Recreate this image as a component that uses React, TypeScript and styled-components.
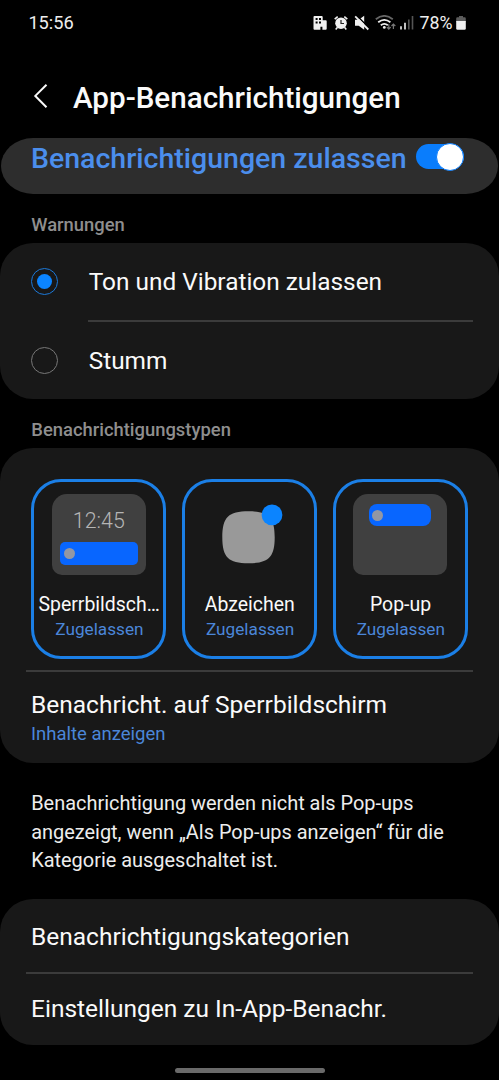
import React, { useState } from "react";
import styled, { createGlobalStyle, css } from "styled-components";

const GlobalStyle = createGlobalStyle`
  * { box-sizing: border-box; }
  body { margin: 0; background: #000; font-family: Roboto, sans-serif; }
`;

const Screen = styled.main`
  display: flex;
  flex-direction: column;
  width: 499px;
  height: 1080px;
  overflow: hidden;
  background: #000;
  color: #fafafa;
`;

const StatusBar = styled.div`
  display: flex;
  align-items: center;
  justify-content: space-between;
  height: 45px;
  padding: 0 33.5px 0 28.4px;
  font-size: 18.2px;
  line-height: 22px;
  color: #eee;
`;

const StatusIcons = styled.div`
  display: flex;
  align-items: center;
  svg { display: block; }
`;

const Percent = styled.span`
  width: 36px;
  margin-left: 5px;
  font-size: 17.8px;
`;

const Header = styled.header`
  display: flex;
  align-items: center;
  height: 93px;
  padding: 12px 0 0 32px;
`;

const BackButton = styled.button`
  display: flex;
  width: 41px;
  padding: 0;
  margin-top: -3px;
  border: 0;
  background: none;
`;

const Title = styled.h1`
  margin: 0;
  font-size: 29.6px;
  font-weight: 500;
  line-height: 36px;
`;

const MasterRow = styled.div`
  display: flex;
  align-items: center;
  justify-content: space-between;
  height: 56px;
  margin: 0 1px;
  padding: 0 34px 17px 30px;
  border-radius: 32px / 28px;
  background: #2d2d2d;
`;

const MasterLabel = styled.span`
  padding-top: 2px;
  font-size: 28.5px;
  font-weight: 500;
  line-height: 34px;
  color: #4b8eec;
  white-space: nowrap;
`;

const Switch = styled.button<{ $on: boolean }>`
  display: flex;
  align-items: center;
  justify-content: ${(p) => (p.$on ? "flex-end" : "flex-start")};
  width: 48px;
  height: 25px;
  padding: 0;
  margin-top: -2px;
  border: 0;
  border-radius: 13px;
  background: ${(p) => (p.$on ? "#0a7dfc" : "#666")};
`;

const Knob = styled.span`
  flex: none;
  width: 28px;
  height: 28px;
  border: 1.5px solid #0a7dfc;
  border-radius: 50%;
  background: #fff;
`;

const SectionLabel = styled.h2<{ $height: number }>`
  display: flex;
  align-items: flex-end;
  height: ${(p) => p.$height}px;
  margin: 0;
  padding: 0 0 7px 31.3px;
  font-size: 18.4px;
  font-weight: 500;
  line-height: 22px;
  color: #8e8e8e;
`;

const Card = styled.section<{ $height: number }>`
  display: flex;
  flex-direction: column;
  height: ${(p) => p.$height}px;
  border-radius: 33px;
  background: #181818;
`;

const Divider = styled.hr<{ $inset: number }>`
  flex: none;
  width: auto;
  height: 1.5px;
  margin: 0 26px 0 ${(p) => p.$inset}px;
  border: 0;
  background: #3b3b3b;
`;

const RadioRow = styled.label`
  display: flex;
  flex: 1;
  align-items: center;
  padding-left: 31px;
  font-size: 24.4px;
`;

const Radio = styled.span<{ $checked: boolean }>`
  display: grid;
  place-items: center;
  width: 27px;
  height: 27px;
  margin-right: 30.7px;
  border: 1.5px solid #777;
  border-radius: 50%;
  ${(p) =>
    p.$checked &&
    css`
      border-color: #1c79d8;
      &::after {
        content: "";
        width: 15px;
        height: 15px;
        border-radius: 50%;
        background: #0b84ff;
      }
    `}
`;

const Tiles = styled.div`
  display: flex;
  gap: 15.7px;
  height: 222px;
  padding: 30.5px 31.3px 11px;
`;

const Tile = styled.div`
  display: flex;
  flex: 1;
  flex-direction: column;
  align-items: center;
  min-width: 0;
  border: 3px solid #1b7fe6;
  border-radius: 30px;
  padding-top: 12.5px;
`;

const Preview = styled.div<{ $plain?: boolean }>`
  display: flex;
  flex-direction: column;
  align-items: center;
  width: 94px;
  height: 80.5px;
  border-radius: 15px 15px 10px 10px;
  background: ${(p) => (p.$plain ? "none" : "#404040")};
  svg { display: block; overflow: visible; }
`;

const Clock = styled.span`
  margin-top: 15px;
  font-size: 21.4px;
  font-weight: 300;
  line-height: 24px;
  color: #b5b5b5;
`;

const Banner = styled.span<{ $popup?: boolean }>`
  display: flex;
  align-items: center;
  width: ${(p) => (p.$popup ? 62 : 78)}px;
  height: ${(p) => (p.$popup ? 22 : 23)}px;
  margin-top: ${(p) => (p.$popup ? 10 : 9)}px;
  padding-left: ${(p) => (p.$popup ? 2.5 : 4)}px;
  border-radius: ${(p) => (p.$popup ? 8 : 5)}px;
  background: #0866ff;
  &::before {
    content: "";
    width: 11px;
    height: 11px;
    border-radius: 50%;
    background: #9297a4;
  }
`;

const TileName = styled.span`
  margin-top: 18px;
  padding-left: 0.6px;
  font-size: 19.45px;
  line-height: 24px;
  white-space: nowrap;
`;

const TileState = styled.span`
  margin-top: 1px;
  padding-left: 1.2px;
  font-size: 17.2px;
  line-height: 22px;
  color: #4b86d8;
`;

const ListRow = styled.div<{ $drop?: number }>`
  display: flex;
  flex: 1;
  flex-direction: column;
  justify-content: center;
  padding-left: 31px;
  padding-top: ${(p) => p.$drop ?? 0}px;
  font-size: 24.5px;
  line-height: 30px;
`;

const SubText = styled.span`
  font-size: 18.5px;
  line-height: 29px;
  color: #4b86d8;
`;

const Note = styled.p`
  height: 136px;
  margin: 0;
  padding: 27.1px 0 0 31.2px;
  font-size: 19.93px;
  line-height: 28.5px;
  color: #ededed;
  white-space: pre-line;
`;

const HomeBar = styled.div`
  width: 150px;
  height: 5px;
  margin: 23px auto 0;
  border-radius: 3px;
  background: #6a6a6a;
`;

const StatusGlyphs = () => (
  <svg width="102" height="16" viewBox="0 0 102 16" fill="none">
    <path
      fill="#f0f0f0"
      fillRule="evenodd"
      d="M1.5 1h7.2q1 0 1 1v3.3h3q1 0 1 1v7.5q0 1-1 1H9.4v-3h-2v3H1.5q-1 0-1-1V2q0-1 1-1zM2.6 3v2h2V3zM6 3v2h2V3zM2.6 6.5v2h2v-2zM6 6.5v2h2v-2z"
    />
    <circle cx="28" cy="8.2" r="5.8" fill="#f0f0f0" />
    <path d="M28 5v3.5h3" stroke="#222" strokeWidth="1.2" />
    <path d="M21.7 4.2l3-2.6M34.3 4.2l-3-2.6M24.3 12.5l-1.6 1.9M31.7 12.5l1.6 1.9" stroke="#f0f0f0" strokeWidth="1.6" />
    <path d="M42 4.8h3.7l5.5-4.1v14.1L45.7 10.7H42z" fill="#f0f0f0" />
    <path d="M43.4 0.2L56.5 13.3" stroke="#000" strokeWidth="1.4" />
    <path d="M42.2 1.3L55.3 14.5" stroke="#f0f0f0" strokeWidth="1.8" />
    <path d="M62.8 4.2Q71.3-2.4 79.8 4.2" stroke="#666" strokeWidth="1.8" />
    <path d="M65.2 7.3Q71.3 2.6 77.4 7.3M67.8 10.3Q71.3 7.6 74.8 10.3" stroke="#f0f0f0" strokeWidth="1.8" />
    <circle cx="71.3" cy="12.4" r="1.4" fill="#f0f0f0" />
    <path d="M75.8 9.3v4.7M73.9 12.2l1.9 2 1.9-2M80.4 14V9.2M78.5 11l1.9-2 1.9 2" stroke="#777" strokeWidth="1.2" />
    <path d="M88 11.2v3.2M92 7.8v6.6" stroke="#f0f0f0" strokeWidth="1.6" />
    <path d="M95.8 4.5v9.9M99.5 1v13.4" stroke="#555" strokeWidth="1.6" />
  </svg>
);

const BatteryIcon = () => (
  <svg width="10" height="16" viewBox="0 0 10 16">
    <path d="M3 1h4v1.3h1.6q1.2 0 1.2 1.2V7H.2V3.5q0-1.2 1.2-1.2H3z" fill="#5b5b5b" />
    <path d="M.2 6h9.6v7.6q0 1.2-1.2 1.2H1.4q-1.2 0-1.2-1.2z" fill="#f0f0f0" />
  </svg>
);

const BadgePreview = () => (
  <svg width="94" height="80.5" viewBox="0 0 94 80.5">
    <path d="M45.5 17.3c20 0 26.2 6 26.2 26s-6.2 26-26.2 26-26.2-6-26.2-26 6.2-26 26.2-26z" fill="#999" />
    <circle cx="69" cy="20.9" r="10.4" fill="#0b84ff" />
  </svg>
);

export default function App() {
  const [allowed, setAllowed] = useState(true);
  const [mode, setMode] = useState(0);
  return (
    <Screen>
      <GlobalStyle />
      <StatusBar>
        <span>15:56</span>
        <StatusIcons>
          <StatusGlyphs />
          <Percent>78%</Percent>
          <BatteryIcon />
        </StatusIcons>
      </StatusBar>
      <Header>
        <BackButton aria-label="Zurück">
          <svg width="18" height="26" viewBox="0 0 18 26" fill="none">
            <path d="M14.5 1.7L3.3 12.9l11.2 11.3" stroke="#fafafa" strokeWidth="2" />
          </svg>
        </BackButton>
        <Title>App-Benachrichtigungen</Title>
      </Header>
      <MasterRow>
        <MasterLabel>Benachrichtigungen zulassen</MasterLabel>
        <Switch $on={allowed} onClick={() => setAllowed(!allowed)}>
          <Knob />
        </Switch>
      </MasterRow>
      <SectionLabel $height={49}>Warnungen</SectionLabel>
      <Card $height={156}>
        <RadioRow onClick={() => setMode(0)}>
          <Radio $checked={mode === 0} />
          Ton und Vibration zulassen
        </RadioRow>
        <Divider $inset={88} />
        <RadioRow onClick={() => setMode(1)}>
          <Radio $checked={mode === 1} />
          Stumm
        </RadioRow>
      </Card>
      <SectionLabel $height={49}>Benachrichtigungstypen</SectionLabel>
      <Card $height={315}>
        <Tiles>
          <Tile>
            <Preview>
              <Clock>12:45</Clock>
              <Banner />
            </Preview>
            <TileName>Sperrbildsch…</TileName>
            <TileState>Zugelassen</TileState>
          </Tile>
          <Tile>
            <Preview $plain>
              <BadgePreview />
            </Preview>
            <TileName>Abzeichen</TileName>
            <TileState>Zugelassen</TileState>
          </Tile>
          <Tile>
            <Preview>
              <Banner $popup />
            </Preview>
            <TileName>Pop-up</TileName>
            <TileState>Zugelassen</TileState>
          </Tile>
        </Tiles>
        <Divider $inset={26} />
        <ListRow $drop={4}>
          Benachricht. auf Sperrbildschirm
          <SubText>Inhalte anzeigen</SubText>
        </ListRow>
      </Card>
      <Note>
        {"Benachrichtigung werden nicht als Pop-ups\nangezeigt, wenn „Als Pop-ups anzeigen“ für die\nKategorie ausgeschaltet ist."}
      </Note>
      <Card $height={146}>
        <ListRow $drop={2}>Benachrichtigungskategorien</ListRow>
        <Divider $inset={26} />
        <ListRow>Einstellungen zu In-App-Benachr.</ListRow>
      </Card>
      <HomeBar />
    </Screen>
  );
}
